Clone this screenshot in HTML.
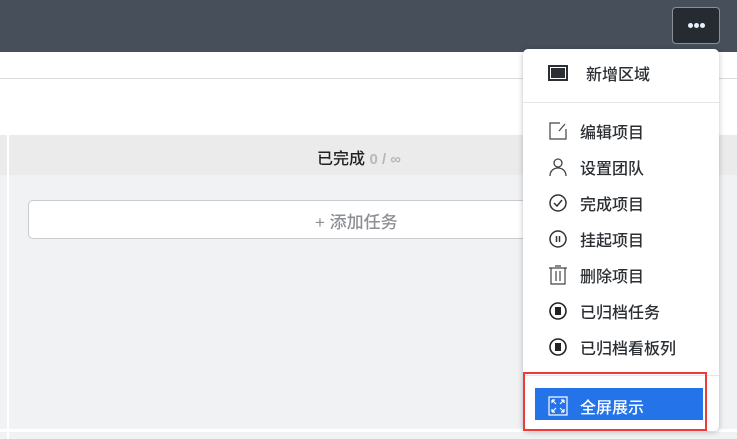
<!DOCTYPE html>
<html><head><meta charset="utf-8"><style>
*{margin:0;padding:0;box-sizing:border-box}
body{width:737px;height:439px;overflow:hidden;position:relative;background:#fff;font-family:"Liberation Sans","Noto Sans CJK SC",sans-serif}
.abs{position:absolute}
.item{position:absolute;left:548px;font-size:16px;font-weight:500;color:#2b2f33;display:flex;align-items:center;height:20px}
.item svg{width:20px;height:20px;margin-right:12px}
</style></head><body>
<div class="abs" style="left:0;top:0;width:737px;height:52px;background:#464f5a"></div>
<div class="abs" style="left:672px;top:7px;width:48px;height:37px;background:#262b31;border:1px solid #8a9097;border-radius:4px"></div>
<div class="abs" style="left:688px;top:23px;width:5px;height:5px;border-radius:50%;background:#e8f0ff"></div>
<div class="abs" style="left:694px;top:23px;width:5px;height:5px;border-radius:50%;background:#e8f0ff"></div>
<div class="abs" style="left:700px;top:23px;width:5px;height:5px;border-radius:50%;background:#e8f0ff"></div>
<div class="abs" style="left:0;top:78px;width:737px;height:1px;background:#dcdcdc"></div>
<div class="abs" style="left:0;top:135px;width:737px;height:304px;background:#f1f2f4"></div>
<div class="abs" style="left:0;top:135px;width:737px;height:40px;background:#ebebeb"></div>
<div class="abs" style="left:7px;top:135px;width:2px;height:304px;background:#fff"></div>
<div class="abs" style="left:0;top:429px;width:737px;height:3px;background:#fff"></div>
<div class="abs" style="left:317px;top:145px;font-size:16px;font-weight:500;color:#222">已完成 <span style="color:#b5b8bc;font-size:15px;font-weight:700">0 / ∞</span></div>
<div class="abs" style="left:28px;top:200px;width:560px;height:39px;background:#fff;border:1px solid #c9cbce;border-radius:5px"></div>
<div class="abs" style="left:315px;top:208px;font-size:17px;font-weight:500;color:#8c8f93">+ 添加任务</div>
<div class="abs" style="left:523px;top:49px;width:196px;height:382px;background:#fff;border-radius:5px;box-shadow:0 1px 6px rgba(0,0,0,.25)"></div>
<div class="abs" style="left:523px;top:102px;width:196px;height:1px;background:#e4e5e8"></div>
<div class="abs" style="left:523px;top:375px;width:196px;height:1px;background:#e4e5e8"></div>
<div class="abs" style="left:535px;top:388px;width:168px;height:32px;background:#2573e8"></div>
<div class="abs" style="left:523px;top:372px;width:184px;height:59px;border:2px solid #f03a3a"></div>
<div class="item" style="top:63px"><svg viewBox="0 0 20 20"><rect x="0" y="2" width="20" height="16" fill="#2b2f33"/><rect x="2.5" y="4.5" width="15" height="11" fill="none" stroke="#fff" stroke-width="1"/></svg><span style="margin-left:6px">新增区域</span></div>
<div class="item" style="top:121px"><svg viewBox="0 0 20 20" fill="none" stroke="#444" stroke-width="1.2"><path d="M12 2H2v16h16V8"/><path d="M17 3l-6 7"/></svg>编辑项目</div>
<div class="item" style="top:157px"><svg viewBox="0 0 20 20" fill="none" stroke="#444" stroke-width="1.3"><circle cx="10" cy="6" r="4"/><path d="M2 19c0-5 3.5-8 8-8s8 3 8 8"/></svg>设置团队</div>
<div class="item" style="top:193px"><svg viewBox="0 0 20 20" fill="none" stroke="#333" stroke-width="1.5"><circle cx="10" cy="10" r="8"/><path d="M6 10l3 3 5-6"/></svg>完成项目</div>
<div class="item" style="top:229px"><svg viewBox="0 0 20 20" fill="none" stroke="#333" stroke-width="1.5"><circle cx="10" cy="10" r="8"/><path d="M8.5 7v6M11.5 7v6"/></svg>挂起项目</div>
<div class="item" style="top:265px"><svg viewBox="0 0 20 20" fill="none" stroke="#444" stroke-width="1.2"><path d="M1 3h18M3 3v16h14V3M8 6v10M12 6v10M7 1h6"/></svg>删除项目</div>
<div class="item" style="top:301px"><svg viewBox="0 0 20 20"><circle cx="10" cy="10" r="8" fill="none" stroke="#222" stroke-width="1.6"/><rect x="7" y="6" width="6" height="8" fill="#222"/></svg>已归档任务</div>
<div class="item" style="top:337px"><svg viewBox="0 0 20 20"><circle cx="10" cy="10" r="8" fill="none" stroke="#222" stroke-width="1.6"/><rect x="7" y="6" width="6" height="8" fill="#222"/></svg>已归档看板列</div>
<div class="item" style="top:396px;color:#fff"><svg viewBox="0 0 20 20" fill="none" stroke="#fff" stroke-width="1.2"><rect x="1" y="1" width="18" height="18"/><path d="M4 4l4 4M4 4h3M4 4v3M16 4l-4 4M16 4h-3M16 4v3M4 16l4-4M4 16h3M4 16v-3M16 16l-4-4M16 16h-3M16 16v-3"/></svg>全屏展示</div>
</body></html>
